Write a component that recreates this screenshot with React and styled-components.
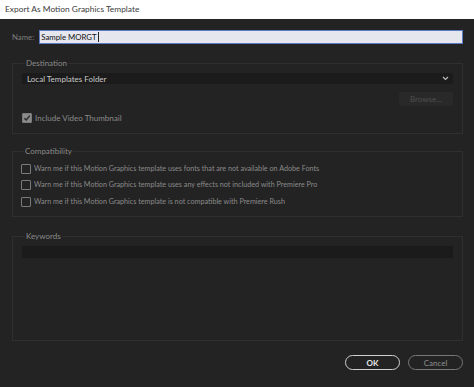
import React from "react";
import styled, { createGlobalStyle } from "styled-components";

const Global = createGlobalStyle`
  html, body { margin: 0; padding: 0; background: #232323; }
  * { box-sizing: border-box; }
  body { font-family: Lato, "Noto Sans", sans-serif; }
`;

const Window = styled.div`
  width: 474px;
  height: 387px;
  display: flex;
  flex-direction: column;
  background: #232323;
  overflow: hidden;
`;

const TitleBar = styled.div`
  height: 19px;
  flex: none;
  background: #ffffff;
  color: #3a3a3a;
  font-size: 8.4px;
  display: flex;
  align-items: center;
  padding-left: 5px;
  padding-bottom: 1px;
`;

const Body = styled.div`
  flex: 1;
  display: flex;
  flex-direction: column;
  padding: 11px 11px 0 12px;
  font-size: 8px;
  color: #8a8a8a;
`;

const NameRow = styled.div`
  display: flex;
  align-items: center;
  gap: 5px;
  height: 14px;
`;

const NameLabel = styled.span`
  color: #7d7d7d;
  font-size: 7.8px;
`;

const NameInput = styled.div`
  flex: 1;
  height: 14px;
  background: #e6e7ee;
  border: 1px solid #5c7ac4;
  color: #111;
  font-size: 7.8px;
  display: flex;
  align-items: center;
  padding-left: 1px;
`;

const Caret = styled.span`
  display: inline-block;
  width: 1px;
  height: 10px;
  background: #222;
  margin-left: 1px;
`;

const Fieldset = styled.fieldset`
  margin: ${(p) => p.$top}px 0 0 0;
  border: 1px solid #2f2f2f;
  padding: ${(p) => p.$pad};
  height: ${(p) => p.$h}px;
  min-width: 0;
  display: flex;
  flex-direction: column;
`;

const Legend = styled.legend`
  font-size: 8px;
  line-height: 10px;
  color: #8a8a8a;
  padding: 0 1px;
  margin-left: 3px;
`;

const Select = styled.div`
  height: 11px;
  background: #1b1b1b;
  color: #c8c8c8;
  font-size: 8px;
  display: flex;
  align-items: center;
  justify-content: space-between;
  padding: 0 4px 0 5px;
`;

const BrowseRow = styled.div`
  display: flex;
  justify-content: flex-end;
  margin-top: 8px;
`;

const Browse = styled.div`
  width: 54px;
  height: 14px;
  background: #292929;
  border-radius: 2px;
  color: #4f4f4f;
  font-size: 8px;
  display: flex;
  align-items: center;
  justify-content: center;
`;

const CheckRow = styled.label`
  display: flex;
  align-items: center;
  gap: 3px;
  height: 11px;
  margin-top: ${(p) => p.$mt || 0}px;
  color: #8a8a8a;
  font-size: ${(p) => p.$fs || 8}px;
`;

const Box = styled.span`
  width: 10px;
  height: 10px;
  flex: none;
  border: 1px solid #7a7a7a;
  border-radius: 1px;
  background: ${(p) => (p.$checked ? "#8a8a8a" : "transparent")};
  display: flex;
  align-items: center;
  justify-content: center;
`;

const KeywordInput = styled.div`
  height: 12px;
  background: #1b1b1b;
  margin-top: 4px;
`;

const Footer = styled.div`
  display: flex;
  justify-content: flex-end;
  gap: 8px;
  margin-top: 14px;
`;

const Button = styled.div`
  width: 55px;
  height: 15px;
  border-radius: 8px;
  border: 1.5px solid ${(p) => (p.$primary ? "#cfcfcf" : "#777")};
  color: ${(p) => (p.$primary ? "#e8e8e8" : "#8f8f8f")};
  font-weight: ${(p) => (p.$primary ? 700 : 400)};
  font-size: 8px;
  display: flex;
  align-items: center;
  justify-content: center;
`;

const Chevron = () => (
  <svg width="7" height="5" viewBox="0 0 7 5">
    <path d="M1 1 L3.5 3.5 L6 1" fill="none" stroke="#bdbdbd" strokeWidth="1.2" />
  </svg>
);

const Check = () => (
  <svg width="8" height="8" viewBox="0 0 8 8">
    <path d="M1.3 4.2 L3.2 6 L6.8 1.6" fill="none" stroke="#2a2a2a" strokeWidth="1.4" />
  </svg>
);

export default function App() {
  return (
    <>
      <Global />
      <Window>
        <TitleBar>Export As Motion Graphics Template</TitleBar>
        <Body>
          <NameRow>
            <NameLabel>Name:</NameLabel>
            <NameInput>
              Sample MORGT
              <Caret />
            </NameInput>
          </NameRow>

          <Fieldset $top={14} $h={76} $pad="5px 9px 0 9px">
            <Legend>Destination</Legend>
            <Select>
              Local Templates Folder
              <Chevron />
            </Select>
            <BrowseRow>
              <Browse>Browse...</Browse>
            </BrowseRow>
            <CheckRow $mt={6}>
              <Box $checked>
                <Check />
              </Box>
              Include Video Thumbnail
            </CheckRow>
          </Fieldset>

          <Fieldset $top={12} $h={71} $pad="7px 9px 0 8px">
            <Legend>Compatibility</Legend>
            <CheckRow $fs={7.2}>
              <Box />
              Warn me if this Motion Graphics template uses fonts that are not available on Adobe Fonts
            </CheckRow>
            <CheckRow $fs={7.2} $mt={5}>
              <Box />
              Warn me if this Motion Graphics template uses any effects not included with Premiere Pro
            </CheckRow>
            <CheckRow $fs={7.2} $mt={6}>
              <Box />
              Warn me if this Motion Graphics template is not compatible with Premiere Rush
            </CheckRow>
          </Fieldset>

          <Fieldset $top={14} $h={110} $pad="1px 9px 0 9px">
            <Legend>Keywords</Legend>
            <KeywordInput />
          </Fieldset>

          <Footer>
            <Button $primary>OK</Button>
            <Button>Cancel</Button>
          </Footer>
        </Body>
      </Window>
    </>
  );
}
